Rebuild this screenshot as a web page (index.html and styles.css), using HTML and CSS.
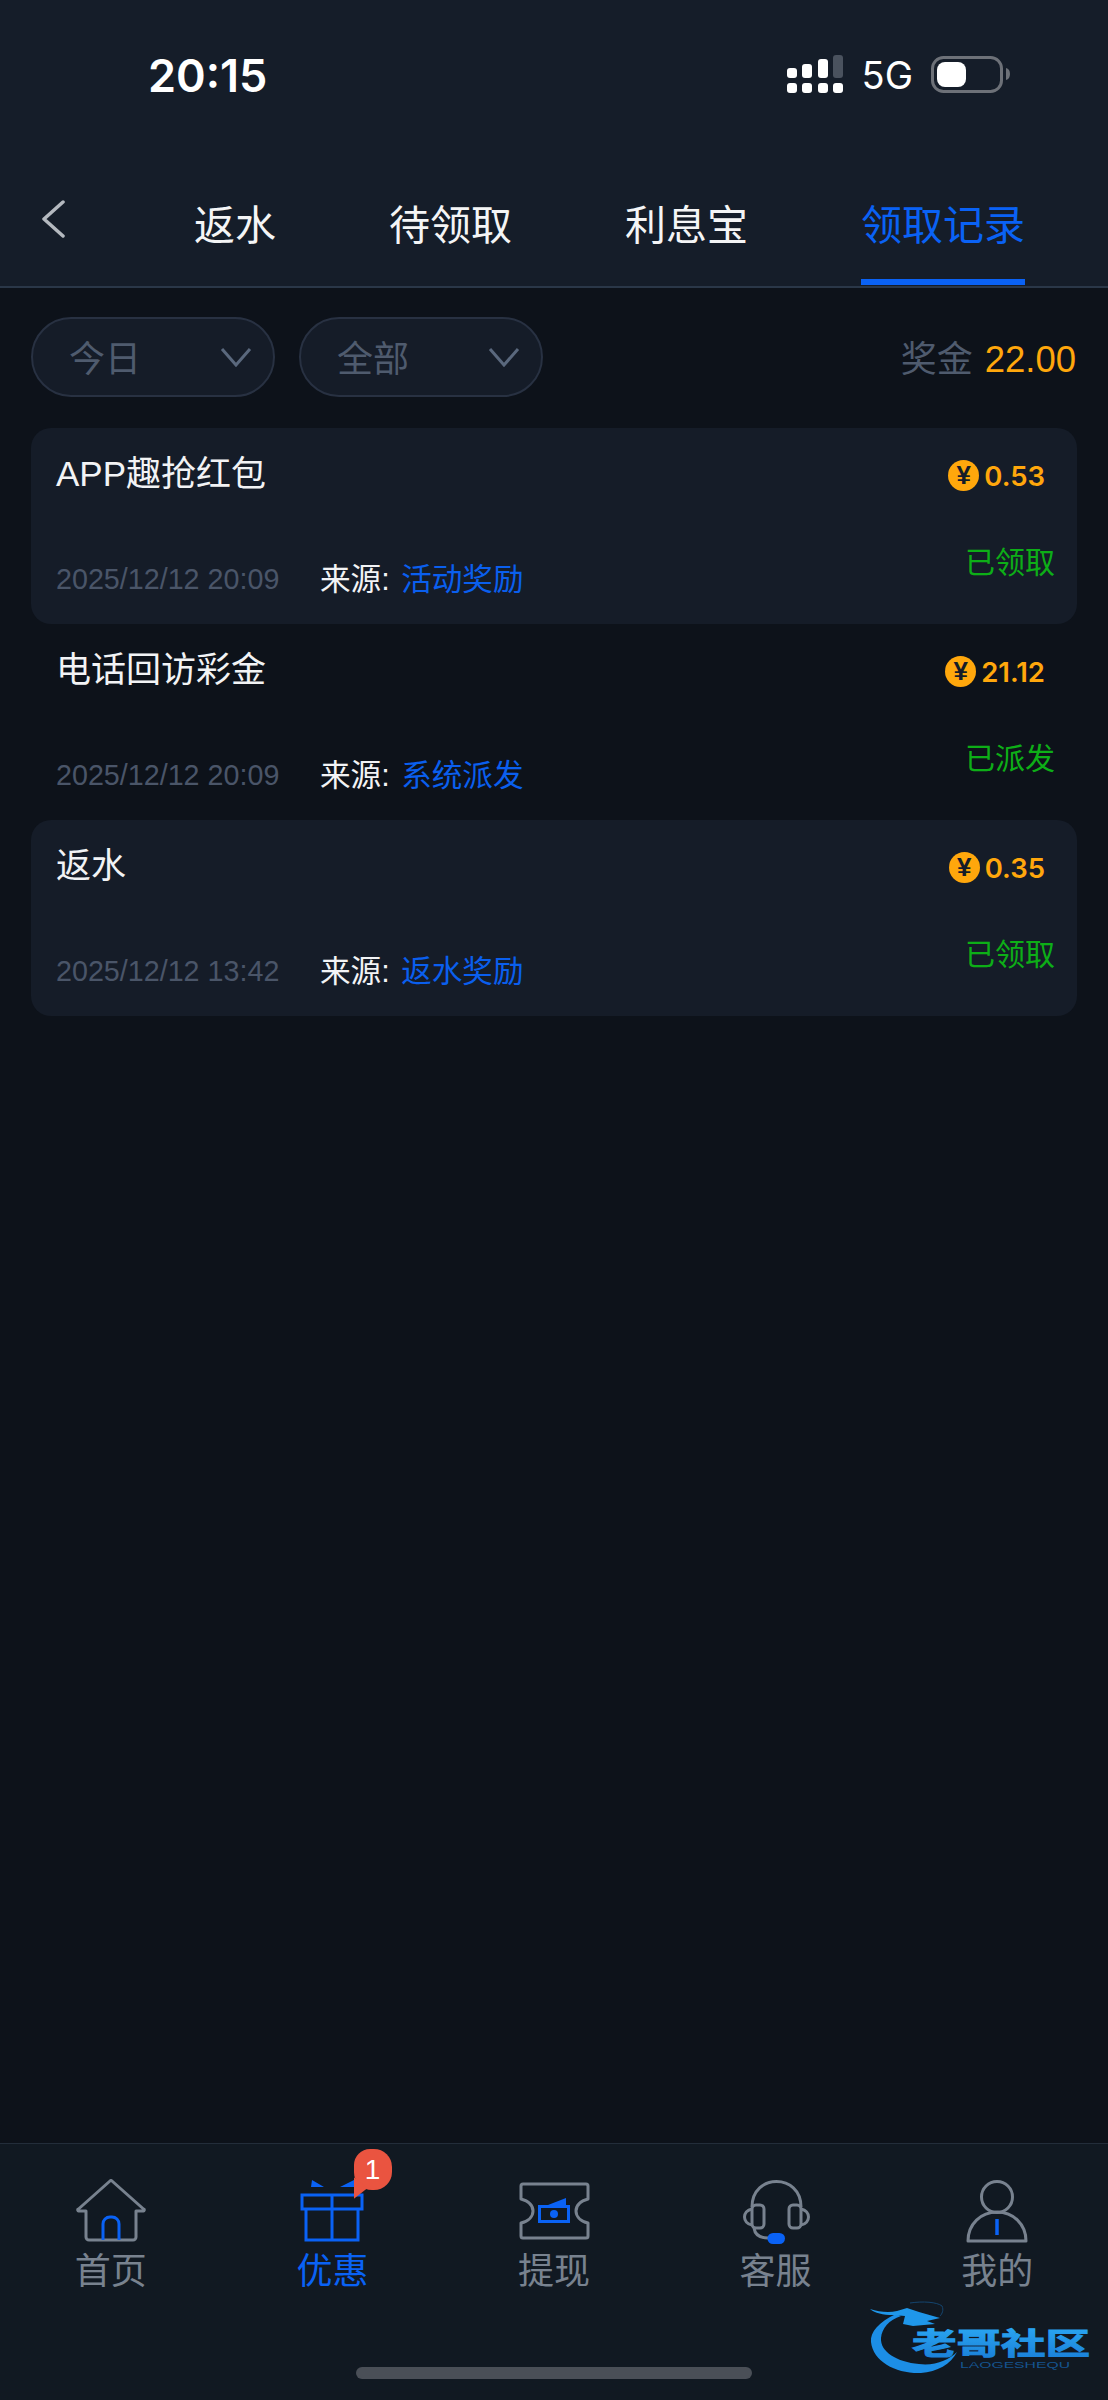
FILE: index.html
```html
<!DOCTYPE html>
<html lang="zh-CN">
<head>
  <meta charset="UTF-8">
  <title>领取记录</title>
  <meta name="viewport" content="width=device-width, initial-scale=1.0">
  <link rel="stylesheet" href="styles.css">
</head>
<body>
  <header class="top">
    <div class="status">
      <span class="time">20:15</span>
      <div class="status-right">
        <svg class="signal" width="56" height="38" viewBox="0 0 56 38">
          <rect x="0" y="13" width="10" height="10" rx="3" fill="#fff"/>
          <rect x="15" y="9" width="10" height="14" rx="3" fill="#fff"/>
          <rect x="31" y="4" width="10" height="19" rx="3" fill="#fff"/>
          <rect x="46" y="0" width="10" height="23" rx="3" fill="#4a525e"/>
          <rect x="0" y="28" width="10" height="10" rx="3" fill="#fff"/>
          <rect x="15" y="28" width="10" height="10" rx="3" fill="#fff"/>
          <rect x="31" y="28" width="10" height="10" rx="3" fill="#fff"/>
          <rect x="46" y="28" width="10" height="10" rx="3" fill="#fff"/>
        </svg>
        <span class="net">5G</span>
        <svg class="battery" width="80" height="38" viewBox="0 0 80 38">
          <rect x="1.5" y="1.5" width="69" height="34" rx="11" fill="none" stroke="#6d7178" stroke-width="3"/>
          <rect x="6" y="6" width="29" height="25" rx="8" fill="#fff"/>
          <path d="M75 12 q4 1 4 6 t-4 6 z" fill="#6d7178"/>
        </svg>
      </div>
    </div>
    <nav class="tabs">
      <svg class="back" width="24" height="38" viewBox="0 0 24 38">
        <path d="M22 2 L3 19 L22 36" fill="none" stroke="#b4b9bf" stroke-width="3.5" stroke-linecap="round" stroke-linejoin="round"/>
      </svg>
      <a class="tab">返水</a>
      <a class="tab">待领取</a>
      <a class="tab">利息宝</a>
      <a class="tab active">领取记录</a>
    </nav>
  </header>

  <main class="content">
    <div class="filters">
      <div class="chip"><span>今日</span>
        <svg width="32" height="20" viewBox="0 0 32 20"><path d="M2 2 L16 18 L30 2" fill="none" stroke="#5a687d" stroke-width="3"/></svg>
      </div>
      <div class="chip"><span>全部</span>
        <svg width="32" height="20" viewBox="0 0 32 20"><path d="M2 2 L16 18 L30 2" fill="none" stroke="#5a687d" stroke-width="3"/></svg>
      </div>
      <div class="bonus">奖金 <b>22.00</b></div>
    </div>

    <div class="list">
      <div class="row filled">
        <div class="row-top">
          <span class="title">APP趣抢红包</span>
          <span class="amount"><i class="coin">¥</i>0.53</span>
        </div>
        <div class="row-bottom">
          <span class="date">2025/12/12 20:09</span>
          <span class="src">来源: <em>活动奖励</em></span>
          <span class="state">已领取</span>
        </div>
      </div>
      <div class="row">
        <div class="row-top">
          <span class="title">电话回访彩金</span>
          <span class="amount"><i class="coin">¥</i>21.12</span>
        </div>
        <div class="row-bottom">
          <span class="date">2025/12/12 20:09</span>
          <span class="src">来源: <em>系统派发</em></span>
          <span class="state">已派发</span>
        </div>
      </div>
      <div class="row filled">
        <div class="row-top">
          <span class="title">返水</span>
          <span class="amount"><i class="coin">¥</i>0.35</span>
        </div>
        <div class="row-bottom">
          <span class="date">2025/12/12 13:42</span>
          <span class="src">来源: <em>返水奖励</em></span>
          <span class="state">已领取</span>
        </div>
      </div>
    </div>
  </main>

  <footer class="bottom">
    <div class="nav">
      <a class="nav-item">
        <svg class="ico" viewBox="0 0 72 66">
          <path d="M11 32 H4 a1 1 0 0 1 -.5 -2 L35 2 a1.5 1.5 0 0 1 2 0 L68.500 30 a1 1 0 0 1 -.5 2 H61 V58 a3 3 0 0 1 -3 3 H14 a3 3 0 0 1 -3 -3 Z" fill="none" stroke="#78828f" stroke-width="3" stroke-linejoin="round"/>
          <path d="M28 61 V45 a7 7 0 0 1 7 -7 h2 a7 7 0 0 1 7 7 V61" fill="none" stroke="#0a62f5" stroke-width="3"/>
        </svg>
        <span>首页</span>
      </a>
      <a class="nav-item on">
        <svg class="ico" viewBox="0 0 72 66">
          <path d="M6 16 H66 V30 H6 Z M10 30 V61 H62 V30 M36 16 V61" fill="none" stroke="#0a62f5" stroke-width="3"/>
          <path d="M16 1 L28 8 H15 Z M58 1 V8 H44 Z" fill="#0a62f5"/>
        </svg>
        <span>优惠</span>
        <i class="badge">1</i>
      </a>
      <a class="nav-item">
        <svg class="ico" viewBox="0 0 72 66">
          <path d="M3 7 a2 2 0 0 1 2 -2 H68 a2 2 0 0 1 2 2 V20 C62 22 58 27 58 32 S62 42 70 44 V57 a2 2 0 0 1 -2 2 H5 a2 2 0 0 1 -2 -2 V44 C11 42 15 37 15 32 S11 22 3 20 Z" fill="none" stroke="#78828f" stroke-width="3" stroke-linejoin="round"/>
          <rect x="21.500" y="27.500" width="29" height="15" fill="none" stroke="#0a62f5" stroke-width="3"/>
          <path d="M30 26 L48 19 V26 Z" fill="#0a62f5"/>
          <circle cx="36" cy="35" r="4" fill="#0a62f5"/>
        </svg>
        <span>提现</span>
      </a>
      <a class="nav-item">
        <svg class="ico" viewBox="0 0 72 66">
          <path d="M12 28 C12 -6 61 -6 61 28" fill="none" stroke="#78828f" stroke-width="3"/>
          <rect x="12" y="26" width="12" height="23" rx="4" fill="none" stroke="#78828f" stroke-width="3"/>
          <rect x="49" y="26" width="12" height="23" rx="4" fill="none" stroke="#78828f" stroke-width="3"/>
          <path d="M12 30 C2 32 2 44 12 46 M61 30 C71 32 71 44 61 46 M14 49 C15 56 20 59 28 59" fill="none" stroke="#78828f" stroke-width="3"/>
          <rect x="27.500" y="54" width="17.500" height="11" rx="5.500" fill="#0a62f5"/>
        </svg>
        <span>客服</span>
      </a>
      <a class="nav-item">
        <svg class="ico" viewBox="0 0 72 66">
          <circle cx="36" cy="18" r="15.500" fill="none" stroke="#78828f" stroke-width="3"/>
          <path d="M7 62 C7 45 20 33 36 33 S65 45 65 62 Z" fill="none" stroke="#78828f" stroke-width="3" stroke-linejoin="round"/>
          <path d="M36 40 V56" stroke="#0a62f5" stroke-width="3.500"/>
        </svg>
        <span>我的</span>
      </a>
    </div>
    <div class="home-bar"></div>
    <svg class="mark" width="224" height="76" viewBox="0 0 224 76">
      <defs>
        <linearGradient id="markBlue" x1="0" y1="0" x2="0" y2="1">
          <stop offset="0" stop-color="#2aa6f2"/>
          <stop offset="1" stop-color="#1a80d8"/>
        </linearGradient>
      </defs>
      <!-- dragon ring -->
      <path d="M27 14 C10 22 1 32 2 42 C4 62 28 74 52 73 C68 72 82 64 88 52 C80 60 66 66 50 64 C28 62 11 52 12 38 C13 28 20 20 32 16 Z" fill="#1c8ee6"/>
      <path d="M1 9 C10 12 20 13 28 11 L38 8 L50 12 L71 18 L58 21 L66 24 L44 26 L34 24 L36 16 L24 15 C14 15 6 13 1 9 Z" fill="#1f97ea"/>
      <path d="M41 3 C54 1 68 2 73 6 C75 10 73 14 71 16" fill="none" stroke="#14456f" stroke-width="1"/>
      <text class="mark-name" x="43" y="53.500" textLength="178" lengthAdjust="spacingAndGlyphs" fill="url(#markBlue)" stroke="url(#markBlue)">老哥社区</text>
      <text class="mark-sub" x="91" y="68" textLength="110" lengthAdjust="spacingAndGlyphs" fill="#15548f">LAOGESHEQU</text>
    </svg>
  </footer>
</body>
</html>
```

FILE: styles.css
```css
* { box-sizing: border-box; }
html, body { margin: 0; padding: 0; }
body {
  width: 1108px; height: 2400px;
  display: flex; flex-direction: column;
  background-color: #0d121a; color: #fff;
  font-family: "Liberation Sans", "Noto Sans CJK SC", sans-serif;
}

/* top */
.top { height: 288px; background-color: #151d29; border-bottom: 2px solid #2a3748; }
.status { height: 50px; margin-top: 50px; padding: 0 97px 0 149px; display: flex; align-items: center; justify-content: space-between; }
.time { font-family: Inter, sans-serif; font-size: 45px; font-weight: 600; margin-left: -1px; }
.status-right { display: flex; align-items: center; }
.signal { margin: -2px 19px 0 0; }
.net { font-family: Inter, sans-serif; font-size: 38px; margin-right: 18px; }
.tabs { margin-top: 86px; padding-left: 41px; display: flex; align-items: flex-start; }
.back { margin: 14px 129px 0 0; }
.tab { display: block; font-size: 41px; line-height: 80px; height: 99px; padding-bottom: 13px; margin-right: 113px; color: #f4f5f6; border-bottom: 6px solid transparent; }
.tab.active { color: #0a62f5; border-bottom-color: #0a62f5; margin-right: 0; }

/* filters + list */
.content { flex: 1; padding: 28px 31px 0; }
.filters { height: 82px; display: flex; align-items: center; gap: 24px; }
.chip {
  width: 244px; height: 80px; padding: 0 21px 0 36px;
  display: flex; align-items: center; justify-content: space-between;
  font-size: 36px; color: #4f5b6e;
  background-color: #151c28; border: 2px solid #283142; border-radius: 40px;
}
.chip span { margin-top: -3px; }
.bonus { margin: -3px 0 0 auto; padding-right: 1px; font-size: 36px; color: #4f5b6e; }
.bonus b { margin-left: 2px; font-size: 36.5px; font-weight: normal; color: #ffa70c; }
.list { margin-top: 30px; }
.row { height: 196px; padding: 26px 22px 25px 25px; display: flex; flex-direction: column; justify-content: space-between; border-radius: 20px; }
.row.filled { background-color: #151c28; }
.row-top { display: flex; align-items: center; justify-content: space-between; height: 40px; }
.title { margin-top: -7px; font-size: 35px; color: #f2f3f5; }
.amount { display: flex; align-items: center; margin: 3px 10px 0 0; font-family: Inter, sans-serif; font-size: 27.5px; font-weight: 600; color: #ffa70c; }
.coin { width: 31px; height: 31px; margin-right: 5px; border-radius: 50%; background-color: #ffa70c; color: #151c28; font-family: "Liberation Sans", sans-serif; font-size: 26px; font-weight: bold; line-height: 31px; font-style: normal; text-align: center; }
.row-bottom { display: flex; align-items: center; height: 40px; }
.date { width: 264px; font-size: 28.7px; color: #4a5568; }
.src { margin-top: -5px; font-size: 30.6px; color: #f2f3f5; }
.src em { font-style: normal; color: #0a5fee; margin-left: 3px; }
.state { margin-left: auto; margin-top: -39px; font-size: 30px; color: #0dae17; }

/* bottom bar */
.bottom { position: relative; height: 257px; background-color: #111922; border-top: 1px solid #232d3a; }
.nav { display: grid; grid-template-columns: repeat(5, 1fr); padding-top: 35px; }
.nav-item { position: relative; display: flex; flex-direction: column; align-items: center; color: #78828f; }
.nav-item.on { color: #0a62f5; }
.ico { display: block; width: 72px; height: 66px; }
.nav-item span { margin-top: 7px; font-size: 36px; line-height: 40px; }
.badge {
  position: absolute; left: 132px; top: -30px;
  width: 38px; height: 41px;
  background-color: #ea5440; color: #fff;
  border-radius: 16px 18px 18px 18px;
  font-size: 28px; line-height: 41px; font-style: normal; text-align: center;
}
.badge::after {
  content: ""; position: absolute; left: 0; top: 28px;
  width: 14px; height: 22px;
  background-color: #ea5440;
  clip-path: polygon(0 0, 100% 50%, 0 100%);
}
.home-bar { position: absolute; left: 356px; top: 223px; width: 396px; height: 12px; border-radius: 6px; background-color: #4a4f57; }
.mark { position: absolute; left: 869px; top: 156px; }
.mark-name { font-size: 30px; font-weight: bold; stroke-width: 1; }
.mark-sub { font-size: 8.5px; }
```
